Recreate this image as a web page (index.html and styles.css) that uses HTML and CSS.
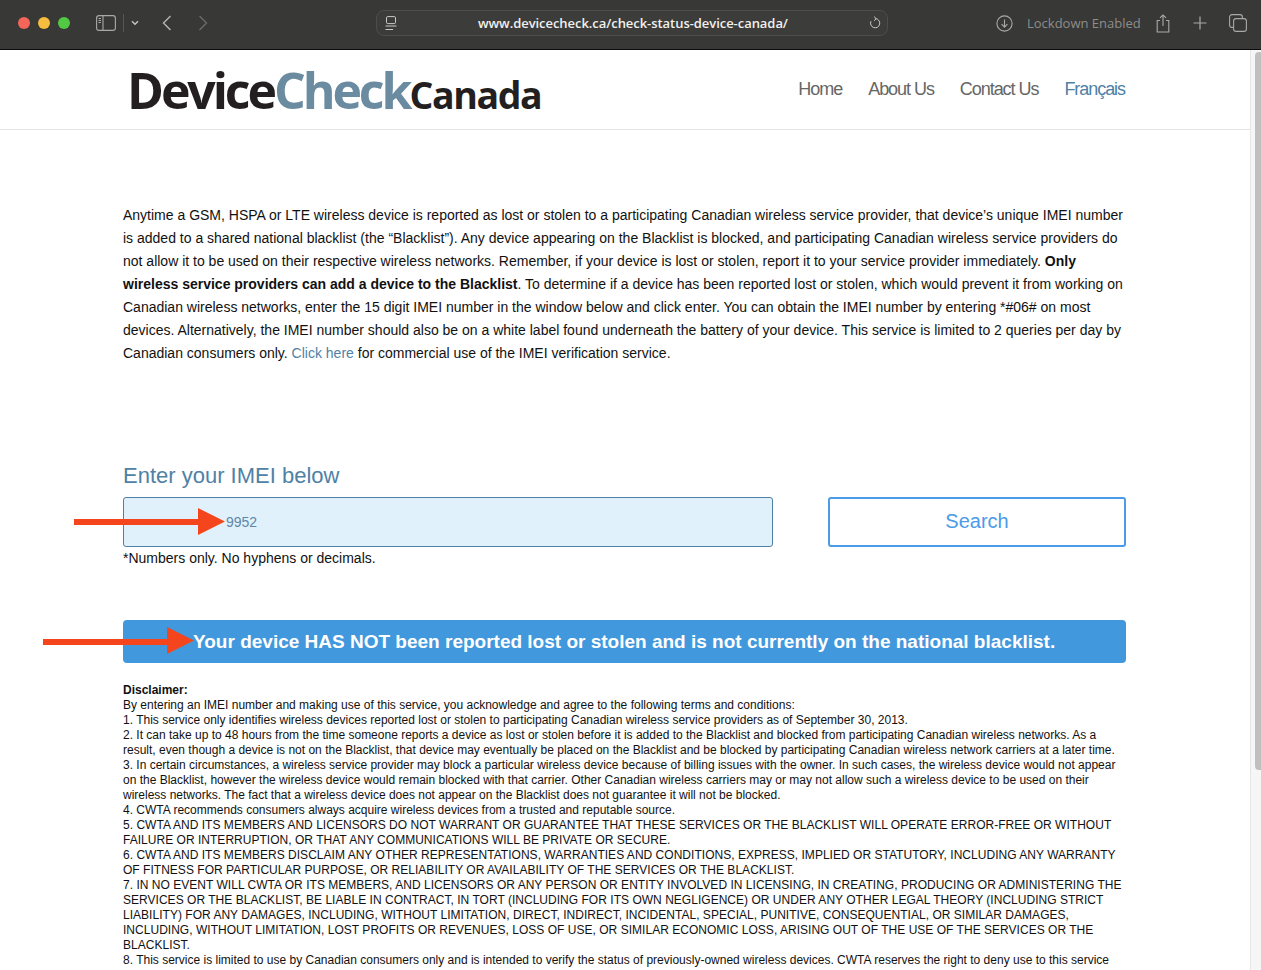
FILE: index.html
```html
<!DOCTYPE html>
<html lang="en">
<head>
    <meta charset="UTF-8">
    <title>Device Check Canada</title>
    <link rel="stylesheet" href="styles.css">
</head>
<body>
    <div class="toolbar">
        <div class="lights">
            <span class="light red"></span>
            <span class="light yellow"></span>
            <span class="light green"></span>
        </div>
        <svg class="tool-icon sidebar-icon" width="20" height="16" viewBox="0 0 20 16" fill="none" stroke="#a9a9a7" stroke-width="1.1">
            <rect x="0.6" y="0.6" width="18.8" height="14.8" rx="2.5"/>
            <path d="M7 0.6V15.4"/>
            <path d="M2.5 3.5H5M2.5 5.5H5M2.5 7.5H5" stroke-width="1"/>
        </svg>
        <span class="tool-sep"></span>
        <svg class="tool-icon chevron-down" width="8" height="6" viewBox="0 0 8 6" fill="none" stroke="#c4c4c2" stroke-width="1.5">
            <path d="M1 1.2L4 4.2L7 1.2"/>
        </svg>
        <svg class="tool-icon back" width="10" height="16" viewBox="0 0 10 16" fill="none" stroke="#b5b5b3" stroke-width="1.4">
            <path d="M8.5 1L1.5 8L8.5 15"/>
        </svg>
        <svg class="tool-icon forward" width="10" height="16" viewBox="0 0 10 16" fill="none" stroke="#6a6a68" stroke-width="1.4">
            <path d="M1.5 1L8.5 8L1.5 15"/>
        </svg>
        <div class="address">
            <svg width="12" height="15" viewBox="0 0 12 15" fill="none" stroke="#c9c9c7" stroke-width="1">
                <rect x="1.5" y="0.6" width="9" height="7" rx="1.2"/>
                <path d="M0.5 10H11.5M0.5 13.5H8" />
            </svg>
            <span class="url">www.devicecheck.ca/check-status-device-canada/</span>
            <svg class="reload" width="12" height="14" viewBox="0 0 12 14" fill="none" stroke="#c9c9c7" stroke-width="1">
                <path d="M6.5 2.6A4.6 4.6 0 1 1 2 5.2"/>
                <path d="M5 0.6L7.2 2.7L5 4.8"/>
            </svg>
        </div>
        <svg class="tool-icon download" width="17" height="17" viewBox="0 0 17 17" fill="none" stroke="#a9a9a7" stroke-width="1.1">
            <circle cx="8.5" cy="8.5" r="7.6"/>
            <path d="M8.5 4.5V12M5.6 9.2L8.5 12.1L11.4 9.2"/>
        </svg>
        <span class="lockdown">Lockdown Enabled</span>
        <svg class="tool-icon share" width="14" height="19" viewBox="0 0 14 19" fill="none" stroke="#a9a9a7" stroke-width="1.1">
            <path d="M4 6.5H1.2V18H12.8V6.5H10"/>
            <path d="M7 12V1M4 3.8L7 0.9L10 3.8"/>
        </svg>
        <svg class="tool-icon plus" width="14" height="14" viewBox="0 0 14 14" fill="none" stroke="#a9a9a7" stroke-width="1.2">
            <path d="M7 0.5V13.5M0.5 7H13.5"/>
        </svg>
        <svg class="tool-icon tabs" width="18" height="18" viewBox="0 0 18 18" fill="none" stroke="#a9a9a7" stroke-width="1.1">
            <rect x="4.6" y="4.6" width="12.8" height="12.8" rx="2.5"/>
            <path d="M4 13.4H3A2.4 2.4 0 0 1 0.6 11V3A2.4 2.4 0 0 1 3 0.6H11A2.4 2.4 0 0 1 13.4 3V4"/>
        </svg>
    </div>

    <div class="page">
        <div class="site">
            <div class="header">
                <div class="logo"><span class="logo-device">Device</span><span class="logo-check">Check</span><span class="logo-canada">Canada</span></div>
                <div class="nav">
                    <a href="#">Home</a>
                    <a href="#">About Us</a>
                    <a href="#">Contact Us</a>
                    <a href="#" class="lang">Français</a>
                </div>
            </div>

            <div class="main">
                <p class="intro">Anytime a GSM, HSPA or LTE wireless device is reported as lost or stolen to a participating Canadian wireless service provider, that device’s unique IMEI number is added to a shared national blacklist (the “Blacklist”). Any device appearing on the Blacklist is blocked, and participating Canadian wireless service providers do not allow it to be used on their respective wireless networks. Remember, if your device is lost or stolen, report it to your service provider immediately. <b>Only wireless service providers can add a device to the Blacklist</b>. To determine if a device has been reported lost or stolen, which would prevent it from working on Canadian wireless networks, enter the 15 digit IMEI number in the window below and click enter. You can obtain the IMEI number by entering *#06# on most devices. Alternatively, the IMEI number should also be on a white label found underneath the battery of your device. This service is limited to 2 queries per day by Canadian consumers only. <a href="#">Click here</a> for commercial use of the IMEI verification service.</p>

                <h2>Enter your IMEI below</h2>
                <div class="search-row">
                    <div class="imei-box">9952</div>
                    <button class="search-btn">Search</button>
                </div>
                <p class="hint">*Numbers only. No hyphens or decimals.</p>

                <div class="result">Your device HAS NOT been reported lost or stolen and is not currently on the national blacklist.</div>

                <div class="disclaimer">
                    <b>Disclaimer:</b><br>
                    By entering an IMEI number and making use of this service, you acknowledge and agree to the following terms and conditions:<br>
                    1. This service only identifies wireless devices reported lost or stolen to participating Canadian wireless service providers as of September 30, 2013.<br>
                    2. It can take up to 48 hours from the time someone reports a device as lost or stolen before it is added to the Blacklist and blocked from participating Canadian wireless networks. As a result, even though a device is not on the Blacklist, that device may eventually be placed on the Blacklist and be blocked by participating Canadian wireless network carriers at a later time.<br>
                    3. In certain circumstances, a wireless service provider may block a particular wireless device because of billing issues with the owner. In such cases, the wireless device would not appear on the Blacklist, however the wireless device would remain blocked with that carrier. Other Canadian wireless carriers may or may not allow such a wireless device to be used on their wireless networks. The fact that a wireless device does not appear on the Blacklist does not guarantee it will not be blocked.<br>
                    4. CWTA recommends consumers always acquire wireless devices from a trusted and reputable source.<br>
                    <span class="caps">5. CWTA AND ITS MEMBERS AND LICENSORS DO NOT WARRANT OR GUARANTEE THAT THESE SERVICES OR THE BLACKLIST WILL OPERATE ERROR-FREE OR WITHOUT FAILURE OR INTERRUPTION, OR THAT ANY COMMUNICATIONS WILL BE PRIVATE OR SECURE.</span><br>
                    <span class="caps">6. CWTA AND ITS MEMBERS DISCLAIM ANY OTHER REPRESENTATIONS, WARRANTIES AND CONDITIONS, EXPRESS, IMPLIED OR STATUTORY, INCLUDING ANY WARRANTY OF FITNESS FOR PARTICULAR PURPOSE, OR RELIABILITY OR AVAILABILITY OF THE SERVICES OR THE BLACKLIST.</span><br>
                    <span class="caps">7. IN NO EVENT WILL CWTA OR ITS MEMBERS, AND LICENSORS OR ANY PERSON OR ENTITY INVOLVED IN LICENSING, IN CREATING, PRODUCING OR ADMINISTERING THE SERVICES OR THE BLACKLIST, BE LIABLE IN CONTRACT, IN TORT (INCLUDING FOR ITS OWN NEGLIGENCE) OR UNDER ANY OTHER LEGAL THEORY (INCLUDING STRICT LIABILITY) FOR ANY DAMAGES, INCLUDING, WITHOUT LIMITATION, DIRECT, INDIRECT, INCIDENTAL, SPECIAL, PUNITIVE, CONSEQUENTIAL, OR SIMILAR DAMAGES, INCLUDING, WITHOUT LIMITATION, LOST PROFITS OR REVENUES, LOSS OF USE, OR SIMILAR ECONOMIC LOSS, ARISING OUT OF THE USE OF THE SERVICES OR THE BLACKLIST.</span><br>
                    8. This service is limited to use by Canadian consumers only and is intended to verify the status of previously-owned wireless devices. CWTA reserves the right to deny use to this service
                </div>

                <svg class="arrow arrow-imei" width="151" height="27" viewBox="0 0 151 27">
                    <path d="M0 11H124V0L151 13.5L124 27V17H0Z" fill="#f4451c"/>
                </svg>
                <svg class="arrow arrow-result" width="151" height="27" viewBox="0 0 151 27">
                    <path d="M0 12H124V0L151 13.5L124 27V18H0Z" fill="#f4451c"/>
                </svg>
            </div>
        </div>

        <div class="scrollbar"><div class="thumb"></div></div>
    </div>
</body>
</html>
```

FILE: styles.css
```css
html, body {
    margin: 0;
    padding: 0;
    height: 100%;
    overflow: hidden;
}

body {
    display: flex;
    flex-direction: column;
    font-family: "Liberation Sans", Arial, sans-serif;
    background: #fff;
    color: #111;
}

/* browser toolbar */
.toolbar {
    flex: none;
    height: 46px;
    padding-bottom: 3px;
    display: flex;
    align-items: center;
    background: #383836;
    border-bottom: 1px solid #0c0c0c;
}

.lights {
    display: flex;
    gap: 8px;
    margin-left: 18px;
}

.light {
    width: 12px;
    height: 12px;
    border-radius: 50%;
}

.red { background: #f4655a; }
.yellow { background: #f7bd3f; }
.green { background: #52c944; }

.tool-icon {
    flex: none;
}

.sidebar-icon { margin-left: 26px; }

.tool-sep {
    width: 1px;
    height: 18px;
    margin-left: 7px;
    background: #555553;
}

.chevron-down { margin-left: 7px; }
.back { margin-left: 23px; }
.forward { margin-left: 26px; }

.address {
    flex: none;
    width: 512px;
    height: 26px;
    box-sizing: border-box;
    margin-left: 168px;
    padding: 0 6px 0 8px;
    display: flex;
    align-items: center;
    border: 1px solid #4d4d4b;
    border-radius: 8px;
    background: #3c3c3a;
}

.url {
    margin-left: 81px;
    font-family: "Open Sans", sans-serif;
    font-size: 13px;
    font-weight: 600;
    letter-spacing: -0.05px;
    color: #f0f0ee;
}

.reload {
    margin-left: auto;
}

.download { margin-left: 108px; }

.lockdown {
    margin-left: 14px;
    font-family: "Open Sans", sans-serif;
    font-size: 13px;
    color: #8d8d8b;
}

.share { margin-left: 15px; }
.plus { margin-left: 23px; }
.tabs { margin-left: 22px; }

/* page */
.page {
    flex: 1;
    min-height: 0;
    display: flex;
}

.site {
    flex: 1;
    min-width: 0;
    overflow: hidden;
}

.scrollbar {
    flex: none;
    width: 10px;
    background: #f6f6f6;
    border-left: 1px solid #e6e6e6;
}

.thumb {
    width: 6px;
    height: 718px;
    margin: 2px 0 0 4px;
    border-radius: 4px 0 0 4px;
    background: #c0c0c0;
}

.header {
    height: 79px;
    display: flex;
    justify-content: space-between;
    padding-left: 127px;
    padding-right: 125px;
    border-bottom: 1px solid #e4e4e4;
}

.logo {
    margin-top: 8px;
    font-family: "Open Sans", sans-serif;
    font-weight: 700;
    line-height: 64px;
    white-space: nowrap;
    color: #231f20;
}

.logo-device {
    font-size: 50px;
    letter-spacing: -3.1px;
}

.logo-check {
    font-size: 50px;
    letter-spacing: -3.1px;
    color: #6a8ba0;
}

.logo-canada {
    font-size: 37.5px;
    letter-spacing: -1.4px;
}

.nav {
    display: flex;
    gap: 26px;
    padding-top: 29px;
}

.nav a {
    font-size: 18px;
    letter-spacing: -1.05px;
    color: #666;
    text-decoration: none;
}

.nav a.lang {
    color: #4f81a5;
}

.main {
    position: relative;
    margin-left: 123px;
    width: 1003px;
}

.intro {
    margin: 0;
    padding-top: 74px;
    font-size: 14px;
    line-height: 23px;
    color: #111;
}

.intro a {
    color: #4f81a5;
    text-decoration: none;
}

h2 {
    margin: 98px 0 0;
    font-size: 22px;
    font-weight: normal;
    line-height: 26px;
    color: #4f81a5;
}

.search-row {
    display: flex;
    justify-content: space-between;
    margin-top: 8px;
}

.imei-box {
    width: 650px;
    height: 50px;
    box-sizing: border-box;
    padding-left: 102px;
    border: 1px solid #4f81a5;
    border-radius: 3px;
    background: #e1f1fc;
    font-size: 14px;
    line-height: 48px;
    color: #5b87a8;
}

.search-btn {
    width: 298px;
    height: 50px;
    padding: 0 0 2px;
    border: 2px solid #4c9be8;
    border-radius: 3px;
    background: #fff;
    font-family: inherit;
    font-size: 20px;
    color: #4c9be8;
}

.hint {
    margin: 3px 0 0;
    font-size: 14px;
    line-height: 17px;
}

.result {
    height: 43px;
    margin-top: 53px;
    padding-left: 70px;
    border-radius: 4px;
    background: #4298dc;
    font-size: 19px;
    font-weight: bold;
    line-height: 44px;
    color: #fff;
}

.disclaimer {
    margin-top: 20px;
    font-size: 12px;
    line-height: 15px;
    color: #111;
}

.caps {
    letter-spacing: 0.025px;
}

.arrow {
    position: absolute;
}

.arrow-imei {
    left: -49px;
    top: 378px;
}

.arrow-result {
    left: -80px;
    top: 497px;
}
```
